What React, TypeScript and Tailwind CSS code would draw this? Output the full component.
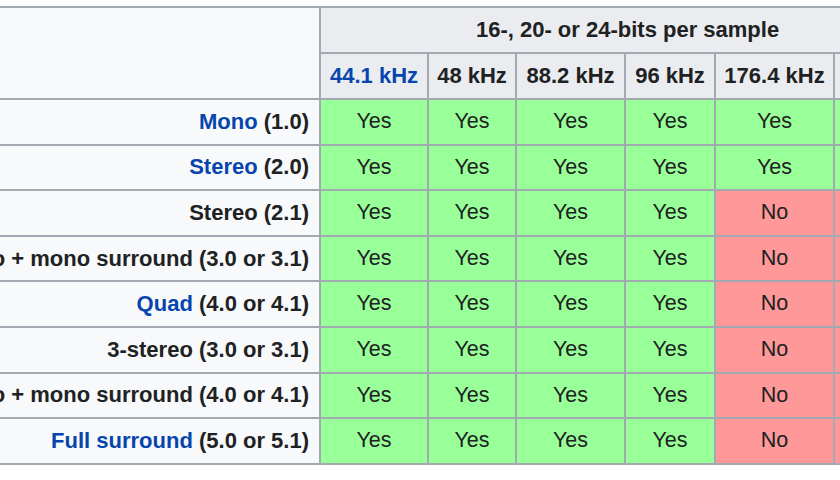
const rates = ['44.1 kHz', '48 kHz', '88.2 kHz', '96 kHz', '176.4 kHz', '192 kHz'];

type Row = { link?: string; label: string; support: boolean[] };

const rows: Row[] = [
  { link: 'Mono', label: ' (1.0)', support: [true, true, true, true, true, true] },
  { link: 'Stereo', label: ' (2.0)', support: [true, true, true, true, true, true] },
  { label: 'Stereo (2.1)', support: [true, true, true, true, false, false] },
  { label: 'Stereo + mono surround (3.0 or 3.1)', support: [true, true, true, true, false, false] },
  { link: 'Quad', label: ' (4.0 or 4.1)', support: [true, true, true, true, false, false] },
  { label: '3-stereo (3.0 or 3.1)', support: [true, true, true, true, false, false] },
  { label: '3-stereo + mono surround (4.0 or 4.1)', support: [true, true, true, true, false, false] },
  { link: 'Full surround', label: ' (5.0 or 5.1)', support: [true, true, true, true, false, false] },
];

export default function App() {
  return (
    <div
      className="w-[840px] h-[480px] overflow-hidden bg-white pt-[6px] text-[#202122]"
      style={{ fontFamily: '"Liberation Sans", Arial, sans-serif' }}
    >
      <table className="ml-[-120px] w-[1055px] table-fixed border-collapse text-[21.5px] leading-none">
        <colgroup>
          <col className="w-[440px]" />
          <col className="w-[108px]" />
          <col className="w-[88px]" />
          <col className="w-[109px]" />
          <col className="w-[90px]" />
          <col className="w-[119px]" />
          <col className="w-[101px]" />
        </colgroup>
        <thead>
          <tr className="h-[46px]">
            <th rowSpan={2} className="border-2 border-l-0 border-[#a2a9b1] bg-[#f8f9fa]" />
            <th colSpan={6} className="border-2 border-[#a2a9b1] bg-[#eaecf0] text-[22px] font-bold">
              16-, 20- or 24-bits per sample
            </th>
          </tr>
          <tr className="h-[46px]">
            {rates.map((r, i) => (
              <th
                key={r}
                className={`border-2 border-[#a2a9b1] bg-[#eaecf0] text-[22px] font-bold whitespace-nowrap ${
                  i === 0 ? 'text-[#0645ad]' : ''
                }`}
              >
                {r}
              </th>
            ))}
          </tr>
        </thead>
        <tbody>
          {rows.map((row, ri) => (
            <tr key={ri} className="h-[45.6px]">
              <th className="border-2 border-l-0 border-[#a2a9b1] bg-[#f8f9fa] pr-[10px] text-right text-[22px] font-bold whitespace-nowrap">
                {row.link && <span className="text-[#0645ad]">{row.link}</span>}
                {row.label}
              </th>
              {row.support.map((ok, ci) => (
                <td
                  key={ci}
                  className={`border-2 border-[#a2a9b1] text-center ${ok ? 'bg-[#9f9]' : 'bg-[#f99]'}`}
                >
                  {ok ? 'Yes' : 'No'}
                </td>
              ))}
            </tr>
          ))}
        </tbody>
      </table>
    </div>
  );
}
